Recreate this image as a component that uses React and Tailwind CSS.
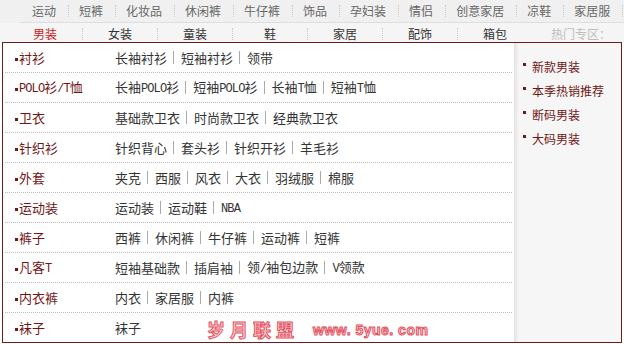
import React from "react";

const topItems = ["运动", "短裤", "化妆品", "休闲裤", "牛仔裤", "饰品", "孕妇装", "情侣", "创意家居", "凉鞋", "家居服"];
const tabs = ["男装", "女装", "童装", "鞋", "家居", "配饰", "箱包"];
const rows = [
  ["衬衫", ["长袖衬衫", "短袖衬衫", "领带"]],
  ["POLO衫/T恤", ["长袖POLO衫", "短袖POLO衫", "长袖T恤", "短袖T恤"]],
  ["卫衣", ["基础款卫衣", "时尚款卫衣", "经典款卫衣"]],
  ["针织衫", ["针织背心", "套头衫", "针织开衫", "羊毛衫"]],
  ["外套", ["夹克", "西服", "风衣", "大衣", "羽绒服", "棉服"]],
  ["运动装", ["运动装", "运动鞋", "NBA"]],
  ["裤子", ["西裤", "休闲裤", "牛仔裤", "运动裤", "短裤"]],
  ["凡客T", ["短袖基础款", "插肩袖", "领/袖包边款", "V领款"]],
  ["内衣裤", ["内衣", "家居服", "内裤"]],
  ["袜子", ["袜子"]],
];
const hot = ["新款男装", "本季热销推荐", "断码男装", "大码男装"];

function Mixed({ text }) {
  const parts = text.match(/[\x00-\x7f]+|[^\x00-\x7f]+/g) || [];
  return (
    <span>
      {parts.map((p, i) =>
        /^[\x00-\x7f]+$/.test(p) ? (
          <span key={i} className="font-['Liberation_Mono',monospace] text-[12px] tracking-[-0.9px]">{p}</span>
        ) : (
          <span key={i}>{p}</span>
        )
      )}
    </span>
  );
}

export default function App() {
  return (
    <div className="relative w-[624px] h-[344px] overflow-hidden bg-white font-['Noto_Sans_CJK_SC',sans-serif]">
      <div className="bg-[#f0f0f0]">
        <div className="flex h-[22px] items-center pl-[22px] text-[12px] leading-[22px] text-[#666]">
          {topItems.map((t) => (
            <div key={t} className="flex items-center">
              <span className="pl-[10px] pr-[12px]">{t}</span>
              <span className="h-[12px] border-l border-dotted border-[#c8c8c8]" />
            </div>
          ))}
        </div>
        <div className="ml-[20px] h-px bg-[#dedede]" />
      </div>
      <div className="flex h-[19px] items-center bg-[#f5f5f5] pl-[8px] pt-[3px] text-[12px] leading-[16px] text-[#333]">
        {tabs.map((t, i) => (
          <div key={t} className="flex items-center">
            <span className={"w-[74px] text-center " + (i === 0 ? "text-[#c81e1e]" : "")}>{t}</span>
            {i < tabs.length - 1 && <span className="h-[12px] border-l border-dotted border-[#c8c8c8]" />}
          </div>
        ))}
        <span className="ml-[19px] text-[#bdbdbd]">热门专区：</span>
      </div>
      <div className="ml-[2px] flex h-[301px] w-[620px] border border-[#6d1b1b]">
        <div className="w-[511px] bg-white">
          {rows.map(([label, links], ri) => (
            <div
              key={label}
              className={
                "mx-[2px] flex items-center text-[13px] leading-[16px] " +
                (ri < rows.length - 1 ? "h-[30px] border-b border-dotted border-[#bbbbbb]" : "h-[29px]")
              }
            >
              <div className="flex w-[110px] items-center pl-[10px] text-[#701616]">
                <span className="mt-[4px] h-[3px] w-[3px] bg-[#701616]" />
                <span className="ml-[1px]"><Mixed text={label} /></span>
              </div>
              <div className="flex items-center text-[#333]">
                {links.map((l, li) => (
                  <React.Fragment key={l}>
                    {li > 0 && <span className="ml-[6px] mr-[7px] h-[13px] w-px bg-[#aaaaaa]" />}
                    <Mixed text={l} />
                  </React.Fragment>
                ))}
              </div>
            </div>
          ))}
        </div>
        <div className="flex-1 bg-[linear-gradient(to_right,#e2e2e2,#f6f6f6_5px)] pl-[9px] pt-[12px] text-[12px] leading-[24px] text-[#701616]">
          {hot.map((h) => (
            <div key={h} className="flex items-center">
              <span className="mb-[5px] h-[3px] w-[3px] bg-[#701616]" />
              <span className="ml-[6px]">{h}</span>
            </div>
          ))}
        </div>
      </div>
      <div className="absolute left-[207px] top-[318px] flex items-end">
        <span className="text-[18px] font-bold leading-[22px] tracking-[5px] text-[#fcd6da] [-webkit-text-stroke:1px_#e4505e]">岁月联盟</span>
        <span className="ml-[14px] mb-[1px] font-['Liberation_Sans',sans-serif] text-[14px] font-bold leading-[18px] tracking-[0.5px] text-[#fcd6da] [-webkit-text-stroke:1px_#e4505e]">www. 5yue. com</span>
      </div>
    </div>
  );
}
